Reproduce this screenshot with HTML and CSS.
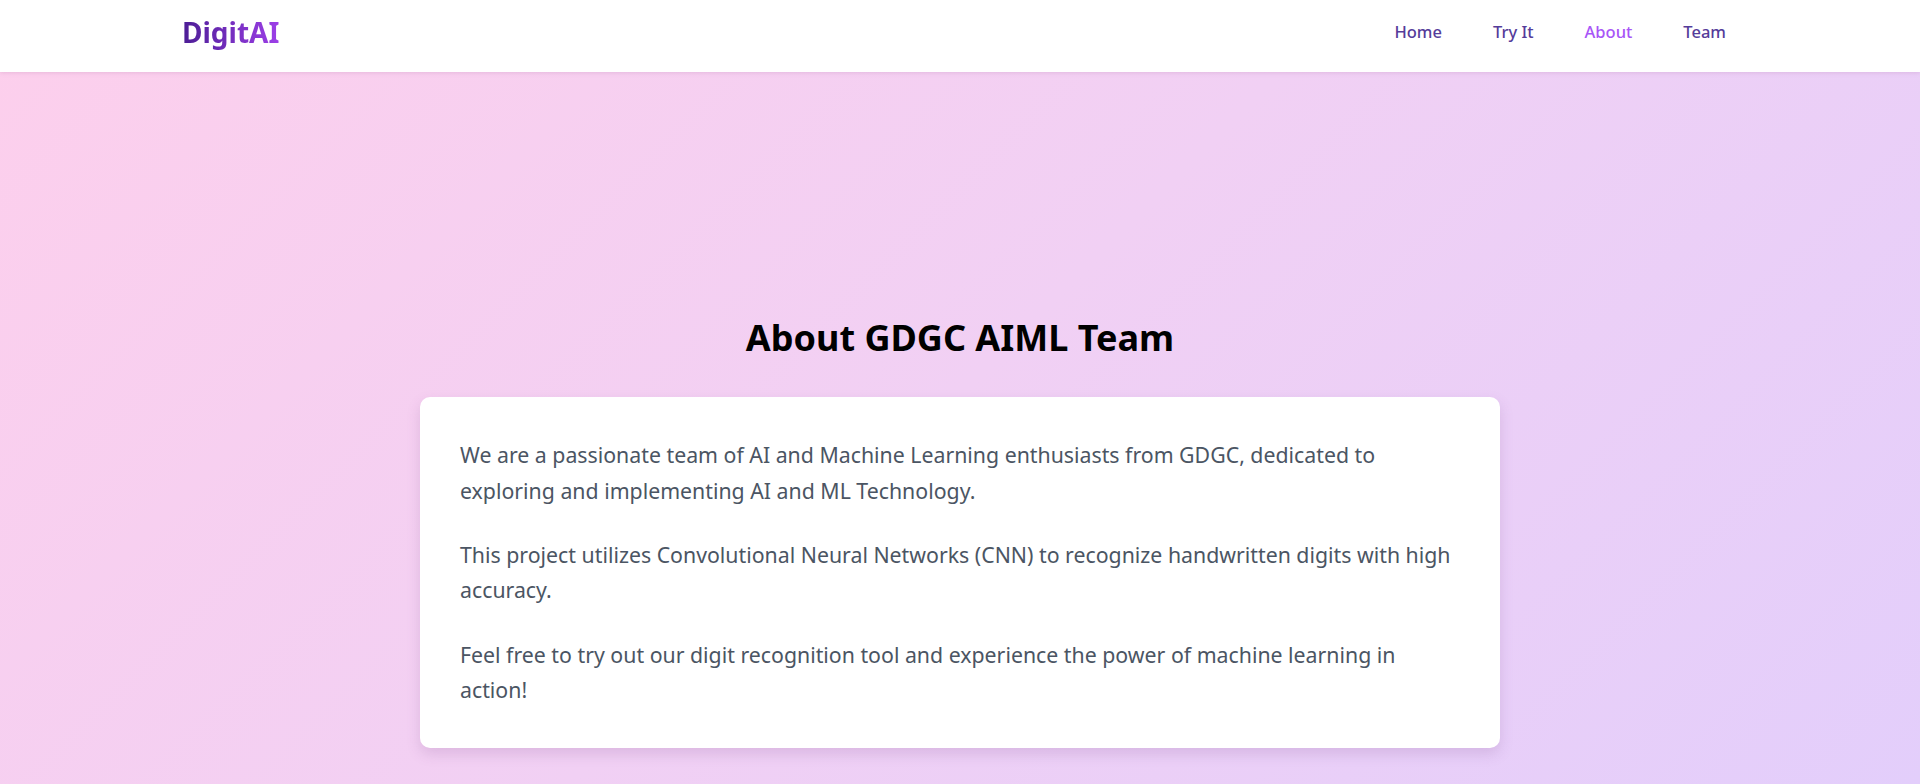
FILE: index.html
```html
<!DOCTYPE html>
<html lang="en">
<head>
    <meta charset="UTF-8">
    <meta name="viewport" content="width=device-width, initial-scale=1.0">
    <title>DigitAI - About</title>
    <link rel="stylesheet" href="styles.css">
</head>
<body>
    <header class="navbar">
        <div class="nav-inner">
            <a class="logo" href="#">DigitAI</a>
            <nav class="nav-links">
                <a href="#">Home</a>
                <a href="#">Try It</a>
                <a href="#" class="active">About</a>
                <a href="#">Team</a>
            </nav>
        </div>
    </header>

    <main class="about">
        <h1>About GDGC AIML Team</h1>
        <div class="about-card">
            <p>We are a passionate team of AI and Machine Learning enthusiasts from GDGC, dedicated to exploring and implementing AI and ML Technology.</p>
            <p>This project utilizes Convolutional Neural Networks (CNN) to recognize handwritten digits with high accuracy.</p>
            <p>Feel free to try out our digit recognition tool and experience the power of machine learning in action!</p>
        </div>
    </main>
</body>
</html>
```

FILE: styles.css
```css
* {
    box-sizing: border-box;
}

body {
    font-family: "Noto Sans", "Open Sans", sans-serif;
    margin: 0;
    padding: 0;
    min-height: 100vh;
    background: linear-gradient(135deg, #fdcfec 0%, #f1d0f4 50%, #e3cefb 100%);
}

.navbar {
    background: #fff;
    height: 72px;
    padding-bottom: 9px;
    box-shadow: 0 1px 4px rgba(180, 120, 170, 0.25);
    position: relative;
}

.nav-inner {
    max-width: 1556px;
    height: 100%;
    margin: 0 auto;
    display: flex;
    align-items: center;
    justify-content: space-between;
}

.logo {
    font-size: 28px;
    font-weight: 700;
    text-decoration: none;
    background: linear-gradient(90deg, #4c1d95, #9d3fe8);
    -webkit-background-clip: text;
    background-clip: text;
    color: transparent;
}

.nav-links {
    display: flex;
    gap: 25px;
}

.nav-links a {
    padding: 0 12px 0 14px;
    font-size: 16.5px;
    font-weight: 500;
    color: #553c9a;
    text-decoration: none;
}

.nav-links a.active {
    color: #a855f7;
}

.about {
    display: flex;
    flex-direction: column;
    align-items: center;
    padding-top: 244px;
}

.about h1 {
    margin: 0 0 38px;
    font-size: 36px;
    font-weight: 700;
    color: #000;
    line-height: 1.2;
}

.about-card {
    width: 1080px;
    background: #fff;
    border-radius: 10px;
    padding: 40px;
    box-shadow: 0 6px 14px rgba(120, 70, 140, 0.18);
}

.about-card p {
    margin: 0 0 29px;
    font-size: 21.3px;
    line-height: 35.4px;
    color: #4b5563;
}

.about-card p:last-child {
    margin-bottom: 0;
}
```
